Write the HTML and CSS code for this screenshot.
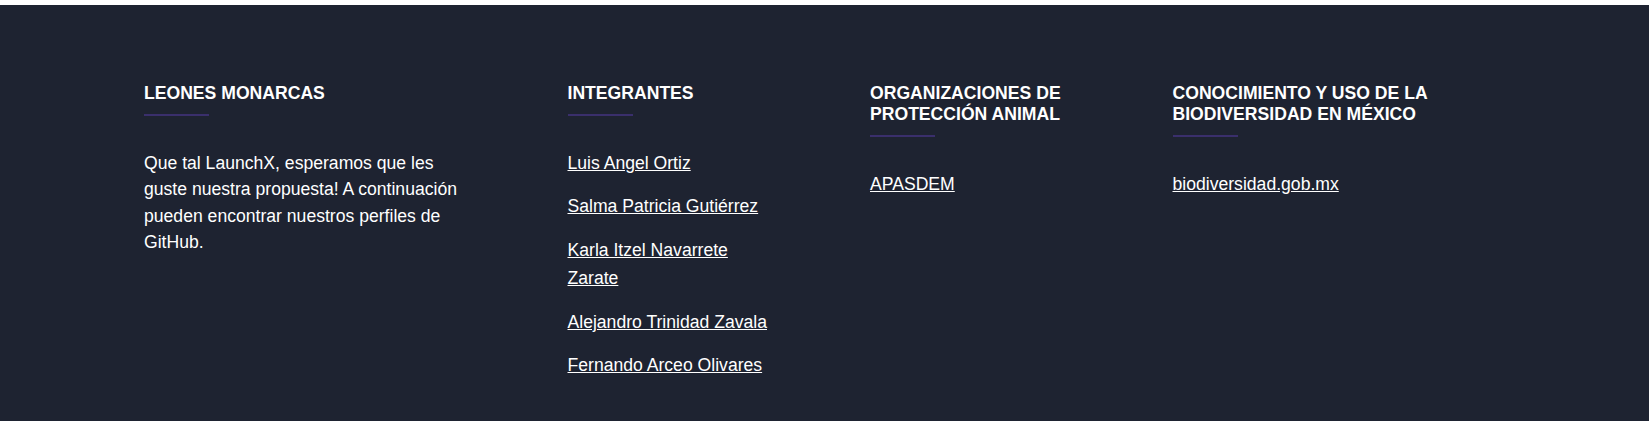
FILE: index.html
```html
<!DOCTYPE html>
<html lang="es">
<head>
<meta charset="utf-8">
<title>Leones Monarcas</title>
<link rel="stylesheet" href="styles.css">
</head>
<body>
<div class="top-band"></div>
<footer class="footer">
  <div class="footer-grid">
    <div class="footer-col">
      <h4 class="footer-title">LEONES MONARCAS</h4>
      <div class="footer-bar"></div>
      <p class="footer-text">Que tal LaunchX, esperamos que les guste nuestra propuesta! A continuación pueden encontrar nuestros perfiles de GitHub.</p>
    </div>
    <div class="footer-col">
      <h4 class="footer-title">INTEGRANTES</h4>
      <div class="footer-bar"></div>
      <ul class="footer-links">
        <li><a href="#">Luis Angel Ortiz</a></li>
        <li><a href="#">Salma Patricia Gutiérrez</a></li>
        <li><a href="#">Karla Itzel Navarrete Zarate</a></li>
        <li><a href="#">Alejandro Trinidad Zavala</a></li>
        <li><a href="#">Fernando Arceo Olivares</a></li>
      </ul>
    </div>
    <div class="footer-col">
      <h4 class="footer-title">ORGANIZACIONES DE PROTECCIÓN ANIMAL</h4>
      <div class="footer-bar"></div>
      <ul class="footer-links">
        <li><a href="#">APASDEM</a></li>
      </ul>
    </div>
    <div class="footer-col">
      <h4 class="footer-title">CONOCIMIENTO Y USO DE LA BIODIVERSIDAD EN MÉXICO</h4>
      <div class="footer-bar"></div>
      <ul class="footer-links">
        <li><a href="#">biodiversidad.gob.mx</a></li>
      </ul>
    </div>
  </div>
</footer>
</body>
</html>
```
FILE: styles.css
```css
html, body {
  margin: 0;
  padding: 0;
  background: #1e2331;
}

body {
  font-family: "Liberation Sans", Arial, sans-serif;
  color: #ffffff;
}

.top-band {
  height: 5px;
  background: #ffffff;
}

.footer {
  background: #1e2331;
  padding: 78px 0 0 144px;
  height: 416px;
  box-sizing: border-box;
  overflow: hidden;
}

.footer-grid {
  display: grid;
  grid-template-columns: 327px 206px 206px 300px;
  column-gap: 96.5px;
  align-items: start;
}

.footer-title {
  margin: 0;
  font-size: 17.6px;
  line-height: 1.2;
  font-weight: 700;
  color: #ffffff;
}

.footer-bar {
  width: 65px;
  height: 2px;
  margin-top: 9.6px;
  margin-bottom: 34px;
  background: #3a2f6c;
}

.footer-text {
  margin: 0;
  font-size: 17.6px;
  line-height: 26.4px;
}

.footer-links {
  list-style: none;
  margin: -0.8px 0 0;
  padding: 0;
  font-size: 17.6px;
  line-height: 28.16px;
}

.footer-links li {
  margin-bottom: 15.4px;
}

.footer-links a {
  color: #ffffff;
  text-decoration: underline;
}
```
